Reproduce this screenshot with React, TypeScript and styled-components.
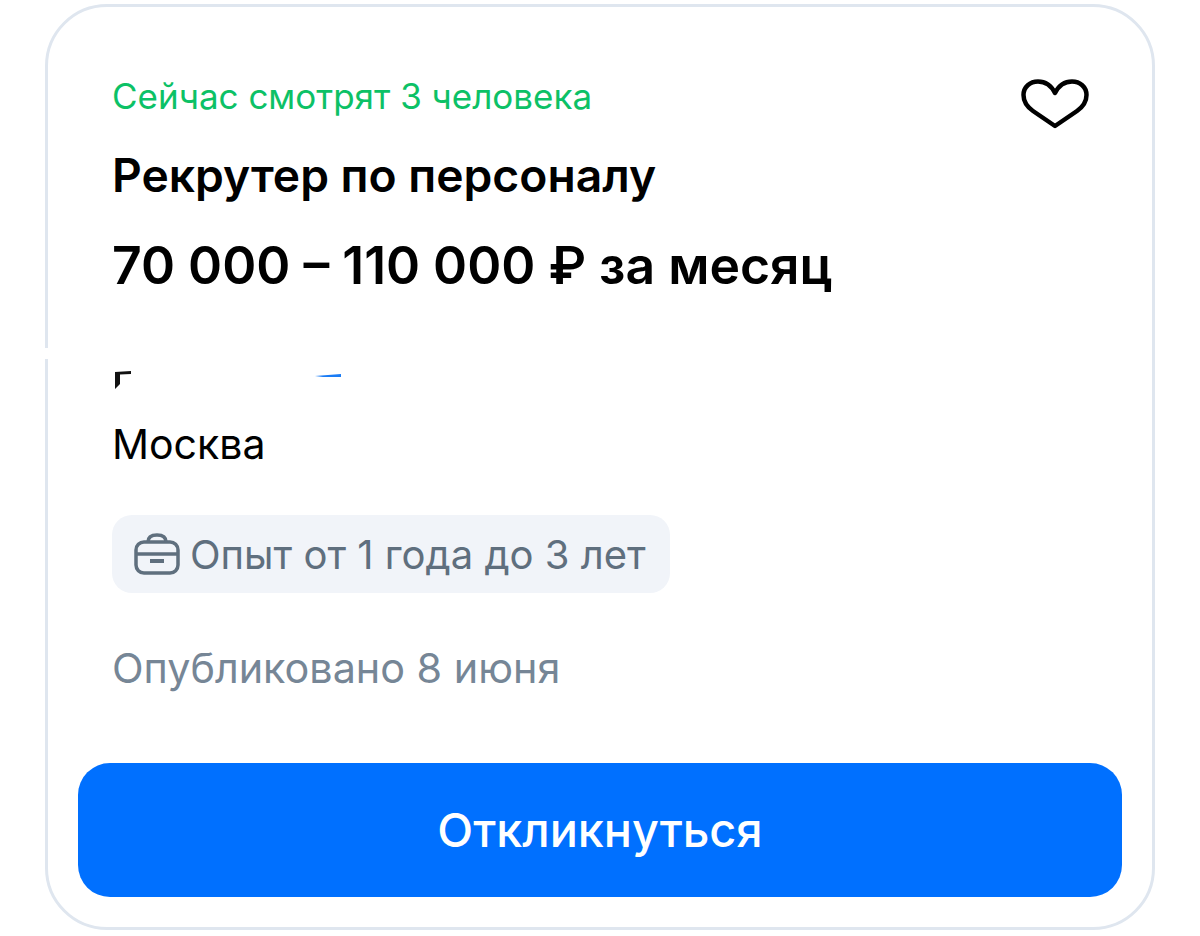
import styled, { createGlobalStyle } from "styled-components";

const GlobalStyle = createGlobalStyle`
  html, body {
    margin: 0;
    padding: 0;
    background: #fff;
    font-family: Inter, "Liberation Sans", sans-serif;
  }
`;

const Page = styled.div`
  width: 1200px;
  height: 936px;
  box-sizing: border-box;
  padding: 4px 45px 6px;
  overflow: hidden;
`;

const Card = styled.div`
  position: relative;
  box-sizing: border-box;
  height: 926px;
  padding: 0 30px 30px;
  display: flex;
  flex-direction: column;
  border: 3px solid #dfe6ef;
  border-radius: 62px;
  background: #fff;
`;

// white patch from the redaction, it cuts the left border
const BorderGap = styled.div`
  position: absolute;
  left: -3px;
  top: 341px;
  width: 3px;
  height: 11px;
  background: #fff;
`;

const Body = styled.div`
  flex: 1;
  padding: 65px 34px 0;
`;

const TopRow = styled.div`
  display: flex;
  justify-content: space-between;
  align-items: flex-start;
  height: 48px;
`;

const Watching = styled.div`
  font-size: 35px;
  line-height: 48px;
  color: #0cc166;
`;

const HeartButton = styled.button`
  border: 0;
  padding: 0;
  background: none;
  display: flex;
  width: 68px;
  height: 50px;
  margin: 7px -1px 0 0;
`;

const Title = styled.h1`
  margin: 27px 0 0;
  font-size: 46.2px;
  line-height: 56px;
  font-weight: 600;
  color: #000;
`;

const Salary = styled.div`
  margin-top: 30px;
  font-size: 51.7px;
  line-height: 64px;
  font-weight: 600;
  color: #000;
`;

const Company = styled.div`
  margin-top: 74px;
  height: 36px;
  box-sizing: border-box;
  padding-left: 3px;
  display: flex;
  align-items: flex-start;
  justify-content: space-between;
  width: 229px;
`;

const BlueMark = styled.svg`
  margin-top: 3px;
`;

const City = styled.div`
  margin-top: 13px;
  font-size: 41px;
  line-height: 48px;
  color: #000;
`;

const Chip = styled.div`
  margin-top: 47px;
  display: flex;
  width: fit-content;
  align-items: center;
  gap: 10px;
  height: 78px;
  box-sizing: border-box;
  padding: 0 24px 0 22px;
  border-radius: 20px;
  background: #f1f4f9;
  font-size: 40px;
  color: #5f6f7e;
`;

const Published = styled.div`
  margin-top: 51px;
  font-size: 41.3px;
  line-height: 48px;
  color: #768696;
`;

const ApplyButton = styled.button`
  height: 134px;
  flex: none;
  border: 0;
  border-radius: 32px;
  background: #0070ff;
  color: #fff;
  font-family: inherit;
  font-size: 46.8px;
  font-weight: 500;
`;

const App = () => (
  <Page>
    <GlobalStyle />
    <Card>
      <BorderGap />
      <Body>
        <TopRow>
          <Watching>Сейчас смотрят 3 человека</Watching>
          <HeartButton aria-label="В избранное">
            <svg width="68" height="50" viewBox="0 0 68 50" fill="none">
              <path
                d="M34 47 L12 32 C5 27 2.5 22 2.5 16 C2.5 8 9 2.5 17 2.5 C24 2.5 30 6 34 14 C38 6 44 2.5 51 2.5 C59 2.5 65.5 8 65.5 16 C65.5 22 63 27 56 32 Z"
                stroke="#000"
                strokeWidth="4.5"
                strokeLinejoin="round"
              />
            </svg>
          </HeartButton>
        </TopRow>
        <Title>Рекрутер по персоналу</Title>
        <Salary>70 000 – 110 000 ₽ за месяц</Salary>
        <Company>
          <svg width="17" height="18" viewBox="0 0 17 18">
            <path d="M0 1 L16 0 L16 3 L5 3.5 L5 13 L0 18 Z" fill="#111" />
          </svg>
          <BlueMark width="26" height="4" viewBox="0 0 26 4">
            <path d="M0 2 L26 0 L26 3 L8 3 Z" fill="#1a7cf5" />
          </BlueMark>
        </Company>
        <City>Москва</City>
        <Chip>
          <svg width="46" height="42" viewBox="0 0 46 42" fill="none" stroke="#5f6f7e" strokeWidth="3.5">
            <rect x="2" y="9" width="42" height="31" rx="8" />
            <path d="M2 21 H44" />
            <path d="M14 9 C14 4 18 2 23 2 C28 2 32 4 32 9" />
            <path d="M16 28 H30" strokeWidth="4" />
          </svg>
          Опыт от 1 года до 3 лет
        </Chip>
        <Published>Опубликовано 8 июня</Published>
      </Body>
      <ApplyButton>Откликнуться</ApplyButton>
    </Card>
  </Page>
);

export default App;
